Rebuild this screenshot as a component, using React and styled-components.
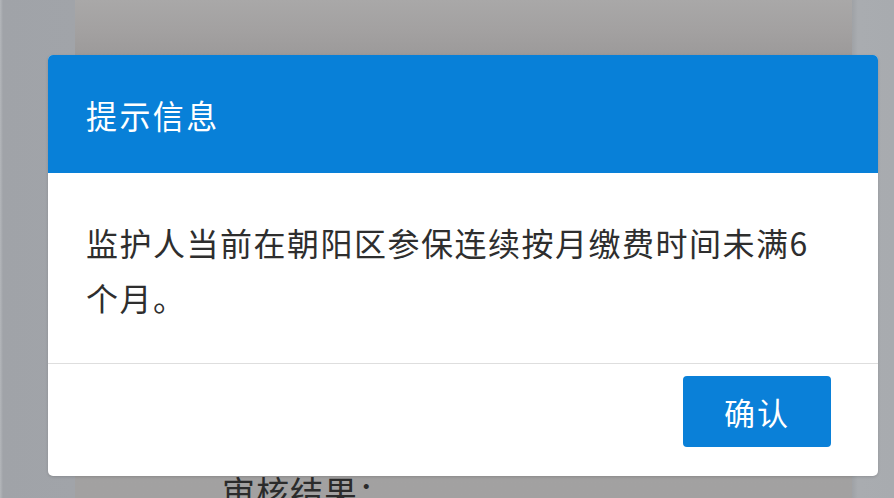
import React from "react";
import styled, { createGlobalStyle } from "styled-components";

const Global = createGlobalStyle`
  html, body { margin: 0; padding: 0; width: 100%; height: 100%; }
  body {
    font-family: "Noto Sans CJK SC", "Noto Sans", sans-serif;
    overflow: hidden;
  }
  #root { height: 100%; }
`;

const Page = styled.div`
  position: relative;
  display: grid;
  grid-template-columns: 75px 1fr 42px;
  width: 894px;
  height: 498px;
  background: #a2a5aa;
`;

const SideStrip = styled.div`
  background: ${(p) => (p.$left ? "linear-gradient(90deg, #b4b7bb 0px, #a0a3a8 3px, #a1a4a9 100%)" : "linear-gradient(90deg, #9fa2a6 0px, #a9acb0 6px, #a8abaf 100%)")};
`;

const Panel = styled.div`
  background: linear-gradient(180deg, #a9a8a8 0px, #a3a1a1 30px, #9c9a9a 55px, #a3a2a2 200px, #a2a1a1 100%);
  display: flex;
  flex-direction: column;
  justify-content: flex-end;
  padding-left: 147px;
`;

const BehindLabel = styled.div`
  font-size: 33px;
  line-height: 40px;
  color: #2b2b2b;
  margin-bottom: -13px;
  letter-spacing: 1px;
`;

const Dialog = styled.div`
  position: absolute;
  left: 48px;
  top: 55px;
  width: 830px;
  height: 421px;
  background: #ffffff;
  border-radius: 5px;
  overflow: hidden;
  display: flex;
  flex-direction: column;
  box-shadow: 0 1px 3px rgba(0, 0, 0, 0.15);
`;

const Header = styled.div`
  height: 118px;
  background: #0880d8;
  display: flex;
  align-items: center;
  padding: 0 38px;
  box-sizing: border-box;
`;

const Title = styled.h2`
  margin: 0;
  font-weight: 400;
  font-size: 31px;
  letter-spacing: 2.4px;
  color: #ffffff;
  transform: scaleY(1.05);
`;

const Body = styled.div`
  padding: 42px 38px 38px 38px;
  font-size: 32px;
  line-height: 55px;
  letter-spacing: 1.5px;
  color: #2e2e2e;
  border-bottom: 1px solid #dedede;
`;

const Footer = styled.div`
  flex: 1;
  display: flex;
  justify-content: flex-end;
  align-items: flex-start;
  padding: 12px 47px 0 0;
`;

const Button = styled.button`
  width: 148px;
  height: 71px;
  border: none;
  border-radius: 4px;
  background: #0a80d8;
  color: #ffffff;
  font-family: inherit;
  font-size: 31px;
  letter-spacing: 2px;
  cursor: pointer;
`;

export default function App() {
  return (
    <>
      <Global />
      <Page>
        <SideStrip $left />
        <Panel>
          <BehindLabel>审核结果：</BehindLabel>
        </Panel>
        <SideStrip />
        <Dialog>
          <Header>
            <Title>提示信息</Title>
          </Header>
          <Body>监护人当前在朝阳区参保连续按月缴费时间未满6个月。</Body>
          <Footer>
            <Button>确认</Button>
          </Footer>
        </Dialog>
      </Page>
    </>
  );
}
